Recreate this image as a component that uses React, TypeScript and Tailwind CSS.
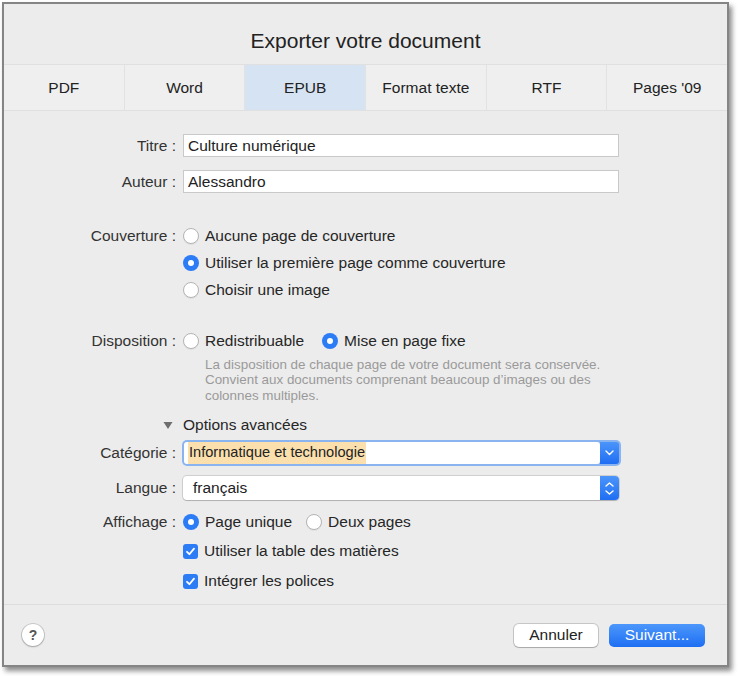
import React from 'react';

const font = { fontFamily: '"Liberation Sans", Arial, sans-serif' };

function Radio({ on }: { on?: boolean }) {
  return on ? (
    <span className="flex h-[16px] w-[16px] shrink-0 items-center justify-center rounded-full bg-[#2c7cf6]">
      <span className="h-[6px] w-[6px] rounded-full bg-white" />
    </span>
  ) : (
    <span className="block h-[16px] w-[16px] shrink-0 rounded-full border border-[#b4b4b4] bg-white shadow-[0_1px_0_rgba(0,0,0,0.05)]" />
  );
}

function Check() {
  return (
    <span className="flex h-[15px] w-[15px] shrink-0 items-center justify-center rounded-[3px] bg-[#2c7cf6]">
      <svg width="11" height="11" viewBox="0 0 11 11" fill="none">
        <path d="M2 5.8 L4.4 8.2 L9 2.6" stroke="white" strokeWidth="1.8" strokeLinecap="round" strokeLinejoin="round" />
      </svg>
    </span>
  );
}

function Row({ label, children, className = '' }: { label?: string; children: React.ReactNode; className?: string }) {
  return (
    <div className={`flex items-center ${className}`}>
      <div className="w-[172px] shrink-0 text-right text-[#333]">{label}</div>
      <div className="ml-[7px] flex flex-1 items-center">{children}</div>
    </div>
  );
}

export default function App() {
  const tabs = ['PDF', 'Word', 'EPUB', 'Format texte', 'RTF', "Pages '09"];
  return (
    <div className="h-[676px] w-[740px] bg-white pl-[2px] pt-[2px]" style={font}>
      <div className="flex h-[665px] w-[727px] flex-col border-2 border-[#858585] bg-[#ececec] text-[15.5px] text-[#262626] shadow-[3px_4px_5px_rgba(0,0,0,0.45)]">
        <div className="flex h-[60px] items-end justify-center pb-[8px] text-[21px] text-[#222]">Exporter votre document</div>
        <div className="flex h-[47px] border-y border-[#e0e0e0] bg-[#efefef]">
          {tabs.map((t, i) => (
            <div
              key={t}
              className={`flex flex-1 items-center justify-center text-[#222] ${i > 0 ? 'border-l border-[#e2e2e2]' : ''} ${t === 'EPUB' ? 'bg-[#d6e3f3]' : ''}`}
            >
              {t}
            </div>
          ))}
        </div>

        <div className="flex flex-1 flex-col">
          <Row label="Titre :" className="mt-[23px]">
            <div className="flex h-[23px] w-[436px] items-center border border-[#c9c9c9] bg-white pl-[4px] text-[#222]">Culture numérique</div>
          </Row>
          <Row label="Auteur :" className="mt-[13px]">
            <div className="flex h-[23px] w-[436px] items-center border border-[#c9c9c9] bg-white pl-[4px] text-[#222]">Alessandro</div>
          </Row>

          <Row label="Couverture :" className="mt-[33px] h-[18px]">
            <Radio />
            <span className="ml-[6px]">Aucune page de couverture</span>
          </Row>
          <Row className="mt-[9px] h-[18px]">
            <Radio on />
            <span className="ml-[6px]">Utiliser la première page comme couverture</span>
          </Row>
          <Row className="mt-[9px] h-[18px]">
            <Radio />
            <span className="ml-[6px]">Choisir une image</span>
          </Row>

          <Row label="Disposition :" className="mt-[33px] h-[18px]">
            <Radio />
            <span className="ml-[6px]">Redistribuable</span>
            <span className="ml-[18px] flex"><Radio on /></span>
            <span className="ml-[6px]">Mise en page fixe</span>
          </Row>
          <div className="ml-[201px] mt-[7px] text-[13.4px] leading-[15.5px] text-[#9a9a9a]">
            La disposition de chaque page de votre document sera conservée.
            <br />
            Convient aux documents comprenant beaucoup d’images ou des
            <br />
            colonnes multiples.
          </div>

          <div className="ml-[159px] mt-[13px] flex h-[18px] items-center">
            <svg width="10" height="9" viewBox="0 0 10 9">
              <path d="M0.5 1 L9.5 1 L5 8 Z" fill="#6e6e6e" />
            </svg>
            <span className="ml-[10px]">Options avancées</span>
          </div>

          <Row label="Catégorie :" className="mt-[6px]">
            <div className="-ml-[1px] flex h-[26px] w-[439px] rounded-[5px] bg-[#8ab4f0] p-[2px]">
              <div className="flex flex-1 items-center rounded-[3px] bg-white pl-[4px]">
                <span className="bg-[#fbe0ae] px-[1px] text-[14.6px] text-[#222]">Informatique et technologie</span>
              </div>
              <div className="flex w-[19px] items-center justify-center rounded-r-[3px] bg-gradient-to-b from-[#4a94fa] to-[#1f6ef3]">
                <svg width="9" height="6" viewBox="0 0 9 6">
                  <path d="M1 1 L4.5 4.5 L8 1" stroke="white" strokeWidth="1.4" fill="none" strokeLinecap="round" strokeLinejoin="round" />
                </svg>
              </div>
            </div>
          </Row>

          <Row label="Langue :" className="mt-[10px]">
            <div className="flex h-[24px] w-[436px] rounded-[4px] bg-white shadow-[0_0_0_1px_rgba(0,0,0,0.12),0_1px_1px_rgba(0,0,0,0.15)]">
              <div className="flex flex-1 items-center pl-[10px] text-[#222]">français</div>
              <div className="flex w-[19px] flex-col items-center justify-center gap-[3px] rounded-r-[4px] bg-gradient-to-b from-[#4a94fa] to-[#1f6ef3]">
                <svg width="9" height="5" viewBox="0 0 9 5">
                  <path d="M1 4 L4.5 1 L8 4" stroke="white" strokeWidth="1.4" fill="none" strokeLinecap="round" strokeLinejoin="round" />
                </svg>
                <svg width="9" height="5" viewBox="0 0 9 5">
                  <path d="M1 1 L4.5 4 L8 1" stroke="white" strokeWidth="1.4" fill="none" strokeLinecap="round" strokeLinejoin="round" />
                </svg>
              </div>
            </div>
          </Row>

          <Row label="Affichage :" className="mt-[13px] h-[18px]">
            <Radio on />
            <span className="ml-[6px]">Page unique</span>
            <span className="ml-[14px] flex"><Radio /></span>
            <span className="ml-[6px]">Deux pages</span>
          </Row>
          <Row className="mt-[11px] h-[18px]">
            <Check />
            <span className="ml-[6px]">Utiliser la table des matières</span>
          </Row>
          <Row className="mt-[12px] h-[18px]">
            <Check />
            <span className="ml-[6px]">Intégrer les polices</span>
          </Row>
        </div>

        <div className="flex h-[61px] items-center border-t border-[#dcdcdc] pl-[18px] pr-[22px]">
          <div className="flex h-[22px] w-[22px] items-center justify-center rounded-full bg-white text-[14px] font-bold text-[#555] shadow-[0_0_0_1px_rgba(0,0,0,0.14),0_1px_2px_rgba(0,0,0,0.2)]">?</div>
          <div className="flex-1" />
          <div className="flex h-[23px] w-[84px] items-center justify-center rounded-[5px] bg-white text-[#222] shadow-[0_0_0_1px_rgba(0,0,0,0.16),0_1px_1px_rgba(0,0,0,0.15)]">Annuler</div>
          <div className="ml-[11px] flex h-[23px] w-[96px] items-center justify-center rounded-[5px] bg-gradient-to-b from-[#4b97fb] to-[#1e6ef3] text-white">Suivant...</div>
        </div>
      </div>
    </div>
  );
}
